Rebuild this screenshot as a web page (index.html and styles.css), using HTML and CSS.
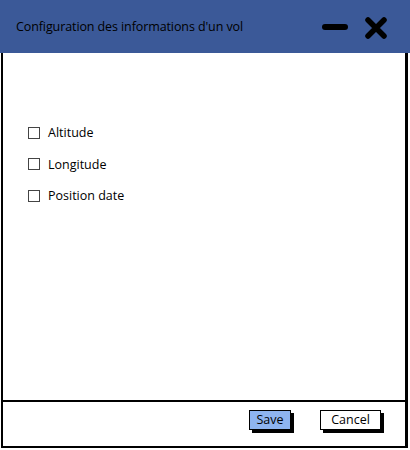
FILE: index.html
```html
<!DOCTYPE html>
<html>
<head>
<meta charset="utf-8">
<link rel="stylesheet" href="styles.css">
</head>
<body>
<div class="window">
  <div class="titlebar">
    <span class="title">Configuration des informations d'un vol</span>
    <div class="controls">
      <svg class="icon-min" width="26" height="8" viewBox="0 0 26 8"><line x1="3" y1="4" x2="23" y2="4" stroke="#000" stroke-width="6" stroke-linecap="round"/></svg>
      <svg class="icon-close" width="24" height="24" viewBox="0 0 24 24"><path d="M4 4 L20 20 M20 4 L4 20" stroke="#000" stroke-width="5.5" stroke-linecap="round"/></svg>
    </div>
  </div>
  <div class="content">
    <label class="row"><span class="box"></span>Altitude</label>
    <label class="row"><span class="box"></span>Longitude</label>
    <label class="row"><span class="box"></span>Position date</label>
  </div>
  <div class="footer">
    <button class="btn primary save">Save</button>
    <button class="btn cancel">Cancel</button>
  </div>
</div>
</body>
</html>
```
FILE: styles.css
```css
html, body {
  margin: 0;
  padding: 0;
  background: #fff;
}
body {
  font-family: "Open Sans", "Liberation Sans", sans-serif;
  color: #000;
  width: 410px;
  height: 450px;
  overflow: hidden;
}
.window {
  display: flex;
  flex-direction: column;
  width: 410px;
  height: 450px;
  box-sizing: border-box;
}
.titlebar {
  height: 53px;
  background: #3b5998;
  display: flex;
  align-items: center;
  justify-content: space-between;
  padding: 0 22px 0 16px;
  box-sizing: border-box;
  flex: none;
}
.title {
  font-size: 12.5px;
  letter-spacing: -0.1px;
  margin-top: -1px;
}
.controls {
  display: flex;
  align-items: center;
  gap: 16px;
}
.icon-min { display: block; margin-top: 1px; }
.icon-close { display: block; margin-top: 2px; }
.content {
  flex: 1;
  margin: 0 2px 0 1px;
  border-left: 2px solid #000;
  border-right: 3px solid #000;
  padding: 70px 0 0 25px;
  display: flex;
  flex-direction: column;
  gap: 12.5px;
}
.row {
  display: flex;
  align-items: center;
  gap: 8px;
  font-size: 12.5px;
  height: 19px;
}
.box {
  width: 10px;
  height: 10px;
  border: 1px solid #444;
  background: #fff;
  flex: none;
}
.footer {
  height: 48px;
  margin: 0 2px 2px 1px;
  border-top: 2px solid #000;
  border-left: 2px solid #000;
  border-right: 3px solid #000;
  border-bottom: 2px solid #000;
  display: flex;
  justify-content: flex-end;
  align-items: flex-start;
  padding: 8px 24px 0 0;
  gap: 29px;
  box-sizing: border-box;
  flex: none;
}
.btn {
  font-family: "Open Sans", "Liberation Sans", sans-serif;
  font-size: 12.5px;
  height: 20px;
  padding: 0;
  border: 1.5px solid #000;
  background: #fff;
  box-shadow: 3px 3px 0 #000;
  color: #000;
  line-height: 16px;
  border-radius: 0;
  text-align: center;
}
.save { width: 42px; }
.cancel { width: 61px; }
.btn.primary {
  background: #8eb4f0;
}
```
